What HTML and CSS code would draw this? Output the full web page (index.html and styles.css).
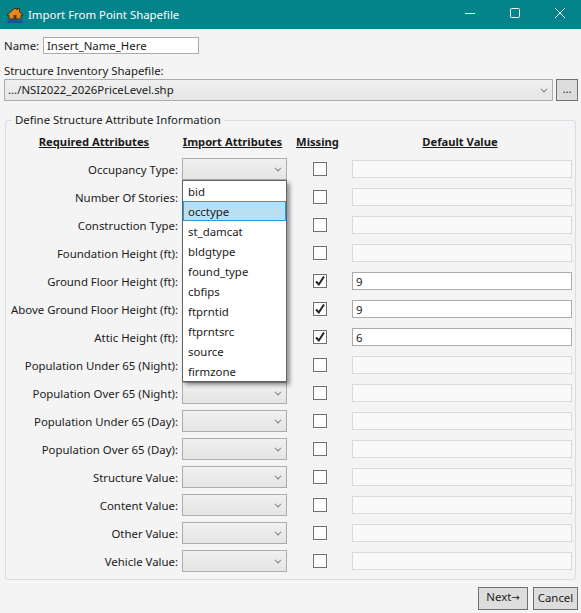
FILE: index.html
```html
<!DOCTYPE html>
<html lang="en">

<head>
  <meta charset="UTF-8">
  <title>Import From Point Shapefile</title>
  <link rel="stylesheet" href="styles.css">
</head>

<body>
  <!-- Title bar -->
  <div class="titlebar">
    <svg class="app-icon" width="18" height="18" viewBox="0 0 18 18">
      <path d="M1 9 L9 2 L11 4 L11 2.500 L13.500 2.500 L13.500 6 L17 9 L15 9.500 L15 13 L3 13 L3 9.500 Z" fill="#e8871e" stroke="#3a2a14" stroke-width="1"/>
      <rect x="7.500" y="9" width="3" height="4" fill="#5a3410"/>
      <path d="M1 14 Q5 12.500 9 14 T17 14 L16 17 L2 17 Z" fill="#1f4f9c"/>
    </svg>
    <span class="title-text">Import From Point Shapefile</span>
    <div class="window-buttons">
      <svg width="10" height="10" viewBox="0 0 10 10"><path d="M0 5.500 H10" stroke="#fff" fill="none"/></svg>
      <svg width="10" height="10" viewBox="0 0 10 10"><rect x="0.500" y="0.500" width="9" height="9" rx="1" stroke="#fff" fill="none"/></svg>
      <svg width="10" height="10" viewBox="0 0 10 10"><path d="M0 0 L10 10 M10 0 L0 10" stroke="#fff" fill="none"/></svg>
    </div>
  </div>

  <div class="content">
    <div class="name-row">
      <label class="name-label">Name:</label>
      <input class="name-input" type="text" value="Insert_Name_Here">
    </div>

    <div class="file-label">Structure Inventory Shapefile:</div>
    <div class="file-row">
      <div class="combo file-combo"><span>.../NSI2022_2026PriceLevel.shp</span><i class="chev"></i></div>
      <button class="btn browse">...</button>
    </div>

    <!-- Attribute table -->
    <fieldset class="group">
      <legend>Define Structure Attribute Information</legend>
      <div class="attr-grid">
        <div class="head">Required Attributes</div>
        <div class="head">Import Attributes</div>
        <div class="head">Missing</div>
        <div class="head">Default Value</div>

        <label>Occupancy Type:</label>
        <div class="combo"><i class="chev"></i>
          <!-- open dropdown -->
          <ul class="popup">
            <li>bid</li>
            <li class="selected">occtype</li>
            <li>st_damcat</li>
            <li>bldgtype</li>
            <li>found_type</li>
            <li>cbfips</li>
            <li>ftprntid</li>
            <li>ftprntsrc</li>
            <li>source</li>
            <li>firmzone</li>
          </ul>
        </div>
        <div class="check"></div><div class="field off"></div>

        <label>Number Of Stories:</label><div class="combo"><i class="chev"></i></div><div class="check"></div><div class="field off"></div>
        <label>Construction Type:</label><div class="combo"><i class="chev"></i></div><div class="check"></div><div class="field off"></div>
        <label>Foundation Height (ft):</label><div class="combo"><i class="chev"></i></div><div class="check"></div><div class="field off"></div>
        <label>Ground Floor Height (ft):</label><div class="combo"><i class="chev"></i></div>
        <div class="check"><svg width="12" height="12" viewBox="0 0 12 12"><path d="M2 6.500 L4.800 9.500 L10 1.500" stroke="#222" stroke-width="2" fill="none"/></svg></div><div class="field">9</div>
        <label>Above Ground Floor Height (ft):</label><div class="combo"><i class="chev"></i></div>
        <div class="check"><svg width="12" height="12" viewBox="0 0 12 12"><path d="M2 6.500 L4.800 9.500 L10 1.500" stroke="#222" stroke-width="2" fill="none"/></svg></div><div class="field">9</div>
        <label>Attic Height (ft):</label><div class="combo"><i class="chev"></i></div>
        <div class="check"><svg width="12" height="12" viewBox="0 0 12 12"><path d="M2 6.500 L4.800 9.500 L10 1.500" stroke="#222" stroke-width="2" fill="none"/></svg></div><div class="field">6</div>
        <label>Population Under 65 (Night):</label><div class="combo"><i class="chev"></i></div><div class="check"></div><div class="field off"></div>
        <label>Population Over 65 (Night):</label><div class="combo"><i class="chev"></i></div><div class="check"></div><div class="field off"></div>
        <label>Population Under 65 (Day):</label><div class="combo"><i class="chev"></i></div><div class="check"></div><div class="field off"></div>
        <label>Population Over 65 (Day):</label><div class="combo"><i class="chev"></i></div><div class="check"></div><div class="field off"></div>
        <label>Structure Value:</label><div class="combo"><i class="chev"></i></div><div class="check"></div><div class="field off"></div>
        <label>Content Value:</label><div class="combo"><i class="chev"></i></div><div class="check"></div><div class="field off"></div>
        <label>Other Value:</label><div class="combo"><i class="chev"></i></div><div class="check"></div><div class="field off"></div>
        <label>Vehicle Value:</label><div class="combo"><i class="chev"></i></div><div class="check"></div><div class="field off"></div>
      </div>
    </fieldset>

    <div class="actions">
      <button class="btn next">Next<span class="arrow">→</span></button>
      <button class="btn cancel">Cancel</button>
    </div>
  </div>
</body>

</html>
```

FILE: styles.css
```css
* {
  box-sizing: border-box;
}

body {
  margin: 0;
  width: 581px;
  height: 613px;
  overflow: hidden;
  background: #f4f4f4;
  color: #1a1a1a;
  font-family: "Noto Sans", "Open Sans", sans-serif;
  font-size: 11.4px;
  line-height: 16px;
}

/* Title bar */
.titlebar {
  height: 29px;
  background: #05838a;
  color: #fff;
  display: flex;
  align-items: center;
  padding-left: 6px;
}

.app-icon {
  margin-right: 4px;
}

.title-text {
  flex: 1;
}

.window-buttons {
  display: flex;
  gap: 35px;
  padding-right: 16px;
  margin-bottom: 3px;
}

/* Top form */
.content {
  padding: 8px 3px 0 4px;
}

.name-row {
  display: flex;
  align-items: center;
  height: 17px;
}

.name-label {
  width: 39px;
}

.name-input {
  width: 156px;
  height: 17px;
  margin: 0;
  padding: 0 3px;
  border: 1px solid #ababab;
  background: #fff;
  color: inherit;
  font: inherit;
}

.file-label {
  margin-top: 9px;
  height: 16px;
}

.file-row {
  display: flex;
  justify-content: space-between;
  height: 22px;
}

.combo {
  position: relative;
  height: 22px;
  border: 1px solid #acacac;
  background: linear-gradient(#f0f0f0, #e5e5e5);
  display: flex;
  align-items: center;
  padding-left: 3px;
}

.file-combo {
  width: 549px;
}

.chev {
  position: absolute;
  right: 5px;
  top: 6px;
  width: 6px;
  height: 6px;
  border-right: 1.500px solid #707070;
  border-bottom: 1.500px solid #707070;
  transform: rotate(45deg) scale(0.8);
}

.btn {
  margin: 0;
  padding: 0 0 2px;
  background: #dddddd;
  border: 1px solid #707070;
  color: inherit;
  font: inherit;
}

.browse {
  width: 22px;
  height: 22px;
}

/* Attribute group */
.group {
  margin: 11px 0 0 1px;
  padding: 0;
  width: 571px;
  height: 468px;
  border: 1px solid #d5dfe5;
  border-radius: 3px;
}

.group legend {
  margin-left: 6px;
  padding: 0 3px;
  height: 16px;
}

.attr-grid {
  display: grid;
  grid-template-columns: 172px 105px 65px 220px;
  grid-auto-rows: 28px;
  margin-top: -1px;
  align-items: center;
}

.attr-grid label {
  text-align: right;
  padding-top: 2px;
}

.attr-grid .combo {
  margin-left: 4px;
  width: 105px;
  justify-self: start;
}

.attr-grid .head {
  text-align: center;
  font-size: 11.2px;
  font-weight: bold;
  text-decoration: underline;
  white-space: nowrap;
  height: 16px;
  margin-top: 2px;
  padding-left: 4px;
}

.check {
  justify-self: center;
  width: 14px;
  height: 14px;
  margin-left: 8px;
  border: 1px solid #707070;
  background: #fff;
  display: flex;
}

.field {
  height: 18px;
  margin-left: 4px;
  width: 220px;
  padding-left: 3px;
  border: 1px solid #ababab;
  background: #fff;
  line-height: 18px;
}

.field.off {
  border-color: #d9d9d9;
  background: #f9f9f9;
}

/* Open combo list */
.popup {
  position: absolute;
  left: -1px;
  top: 21px;
  width: 105px;
  height: 202px;
  margin: 0;
  padding: 0;
  list-style: none;
  background: #fff;
  border: 1px solid #646464;
  box-shadow: 3px 3px 4px rgba(0, 0, 0, 0.4);
  z-index: 5;
}

.popup li {
  height: 20px;
  line-height: 20px;
  padding-left: 4px;
  border: 1px solid transparent;
}

.popup .selected {
  background: #b8dff2;
  border-color: #2b9bd8;
}

/* Bottom buttons */
.actions {
  display: flex;
  justify-content: flex-end;
  gap: 5px;
  margin-top: 7px;
}

.next {
  width: 50px;
  height: 23px;
}

.arrow {
  font-family: "DejaVu Sans", sans-serif;
  font-size: 10px;
}

.cancel {
  width: 45px;
  height: 23px;
}
```
